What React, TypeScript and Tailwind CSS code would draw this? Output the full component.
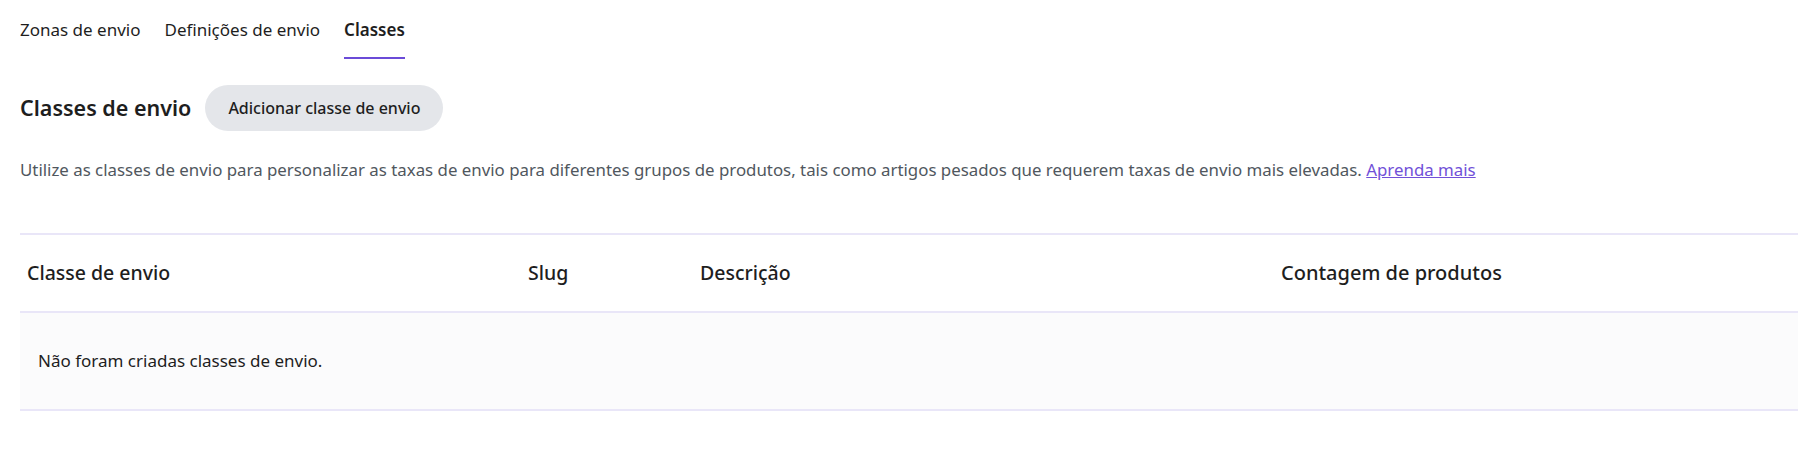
import React from "react";

const tabs = ["Zonas de envio", "Definições de envio", "Classes"];

function App() {
  return (
    <div className="min-h-screen bg-white px-5 text-[#1e1e1e]" style={{ fontFamily: '"Noto Sans", "Open Sans", sans-serif' }}>
      <div className="flex gap-6 pt-[17px]">
        {tabs.map((t) => (
          <div key={t} className="flex flex-col">
            <span className={"text-[17px] leading-[26px] " + (t === "Classes" ? "font-semibold" : "")}>{t}</span>
            <span className={"mt-[14px] h-[2px] " + (t === "Classes" ? "bg-[#6b4bd8]" : "bg-transparent")}></span>
          </div>
        ))}
      </div>

      <div className="mt-[26px] flex items-center gap-[14px]">
        <h2 className="text-[21.5px] font-semibold leading-[30px]">Classes de envio</h2>
        <button className="h-[46px] rounded-full bg-[#e4e6ea] px-[23px] text-[16px] font-medium">
          Adicionar classe de envio
        </button>
      </div>

      <p className="mt-[27px] text-[16.85px] leading-[24px] text-[#50575e]">
        Utilize as classes de envio para personalizar as taxas de envio para diferentes grupos de produtos, tais como artigos pesados que requerem taxas de envio mais elevadas.{" "}
        <a href="#" className="text-[#7150d8] underline">Aprenda mais</a>
      </p>

      <div className="mt-[51px] border-y-2 border-[#e9e6f8]">
        <div className="grid h-[76px] grid-cols-[500px_172px_581px_1fr] items-center text-[19.5px] font-medium">
          <div className="pl-[7px]">Classe de envio</div>
          <div className="pl-2">Slug</div>
          <div className="pl-2">Descrição</div>
          <div className="pl-2 text-[20px]">Contagem de produtos</div>
        </div>
        <div className="flex h-[98px] items-center border-t-2 border-[#e9e6f8] bg-[#fbfbfc] pl-[18px] text-[17px]">
          Não foram criadas classes de envio.
        </div>
      </div>
    </div>
  );
}

export default App;
